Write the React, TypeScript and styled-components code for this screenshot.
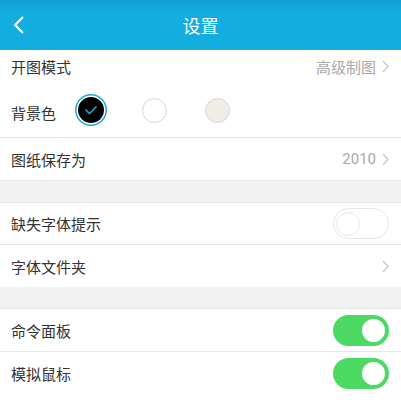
import styled, { createGlobalStyle } from "styled-components";

const GlobalStyle = createGlobalStyle`
  body {
    margin: 0;
    background: #fff;
    font-family: "Noto Sans CJK SC", "Noto Sans", sans-serif;
  }
`;

const Page = styled.div`
  width: 401px;
  height: 404px;
  overflow: hidden;
  background: #fff;
`;

const Header = styled.header`
  height: 50px;
  background: linear-gradient(#0fa2d3 0px, #14ade0 12px, #14ade0 100%);
  display: flex;
  align-items: center;
  justify-content: center;
  position: relative;
  color: #fff;
  font-size: 18px;
`;

const BackButton = styled.div`
  position: absolute;
  left: 12px;
  top: 14px;
  width: 16px;
  height: 22px;
  display: flex;
`;

const Row = styled.div<{ $h?: number; $line?: boolean; $shift?: number }>`
  height: ${(p) => p.$h ?? 43}px;
  box-sizing: border-box;
  padding: 0 12px 0 11px;
  padding-bottom: ${(p) => p.$shift ?? 0}px;
  display: flex;
  align-items: center;
  border-bottom: ${(p) => (p.$line ? "1px solid #e6e6e6" : "none")};
  background: #fff;
`;

const Label = styled.span`
  font-size: 15px;
  color: #333;
`;

const Value = styled.span`
  margin-left: auto;
  font-family: Roboto, "Noto Sans CJK SC", sans-serif;
  font-size: 15px;
  color: #a8a8a8;
  display: flex;
  align-items: center;
  gap: 6px;
`;

const Gap = styled.div`
  height: 21px;
  background: #f2f2f2;
  border-bottom: 1px solid #e6e6e6;
`;

const Swatches = styled.div`
  display: flex;
  align-items: center;
  gap: 38px;
  margin-left: 22px;
  margin-top: -5px;
`;

const Swatch = styled.div<{ $color: string; $selected?: boolean }>`
  width: ${(p) => (p.$selected ? 26 : 25)}px;
  height: ${(p) => (p.$selected ? 26 : 25)}px;
  border-radius: 50%;
  box-sizing: border-box;
  background: ${(p) => p.$color};
  border: ${(p) => (p.$selected ? "none" : "1px solid #d6d6d6")};
  box-shadow: ${(p) => (p.$selected ? "0 0 0 1.5px #fff, 0 0 0 3px #1aa6d8" : "none")};
  display: flex;
  align-items: center;
  justify-content: center;
`;

const Toggle = styled.div<{ $on?: boolean }>`
  margin-left: auto;
  width: 56px;
  height: 31px;
  border-radius: 16px;
  box-sizing: border-box;
  background: ${(p) => (p.$on ? "#4cd964" : "#fff")};
  border: ${(p) => (p.$on ? "none" : "1.5px solid #e4e4e4")};
  display: flex;
  align-items: center;
  justify-content: ${(p) => (p.$on ? "flex-end" : "flex-start")};
  padding: ${(p) => (p.$on ? "0 4px" : "0 2px")};
`;

const Knob = styled.div<{ $on?: boolean }>`
  width: ${(p) => (p.$on ? 23 : 24)}px;
  height: ${(p) => (p.$on ? 23 : 24)}px;
  border-radius: 50%;
  background: #fff;
  box-sizing: border-box;
  border: ${(p) => (p.$on ? "none" : "1px solid #e6e6e6")};
`;

const Chevron = () => (
  <svg width="7" height="13" viewBox="0 0 7 13">
    <path d="M1 1 L6 6.5 L1 12" fill="none" stroke="#c8c8c8" strokeWidth="1.3" />
  </svg>
);

const App = () => {
  return (
    <Page>
      <GlobalStyle />
      <Header>
        <BackButton>
          <svg width="16" height="22" viewBox="0 0 16 22">
            <path d="M11 3 L3 11 L11 19" fill="none" stroke="#fff" strokeWidth="2" />
          </svg>
        </BackButton>
        设置
      </Header>
      <Row $h={38} $shift={6}>
        <Label>开图模式</Label>
        <Value>
          高级制图
          <Chevron />
        </Value>
      </Row>
      <Row $h={50} $line>
        <Label>背景色</Label>
        <Swatches>
          <Swatch $color="#000" $selected>
            <svg width="14" height="10" viewBox="0 0 14 10">
              <path d="M1.5 4.5 L5.5 8.5 L12.5 1.5" fill="none" stroke="#1aa6d8" strokeWidth="1.6" />
            </svg>
          </Swatch>
          <Swatch $color="#fff" />
          <Swatch $color="#efede5" />
        </Swatches>
      </Row>
      <Row $line>
        <Label>图纸保存为</Label>
        <Value>
          2010
          <Chevron />
        </Value>
      </Row>
      <Gap />
      <Row $h={42} $line>
        <Label>缺失字体提示</Label>
        <Toggle>
          <Knob />
        </Toggle>
      </Row>
      <Row $h={42}>
        <Label>字体文件夹</Label>
        <Value>
          <Chevron />
        </Value>
      </Row>
      <Gap />
      <Row $line>
        <Label>命令面板</Label>
        <Toggle $on>
          <Knob $on />
        </Toggle>
      </Row>
      <Row>
        <Label>模拟鼠标</Label>
        <Toggle $on>
          <Knob $on />
        </Toggle>
      </Row>
    </Page>
  );
};

export default App;
